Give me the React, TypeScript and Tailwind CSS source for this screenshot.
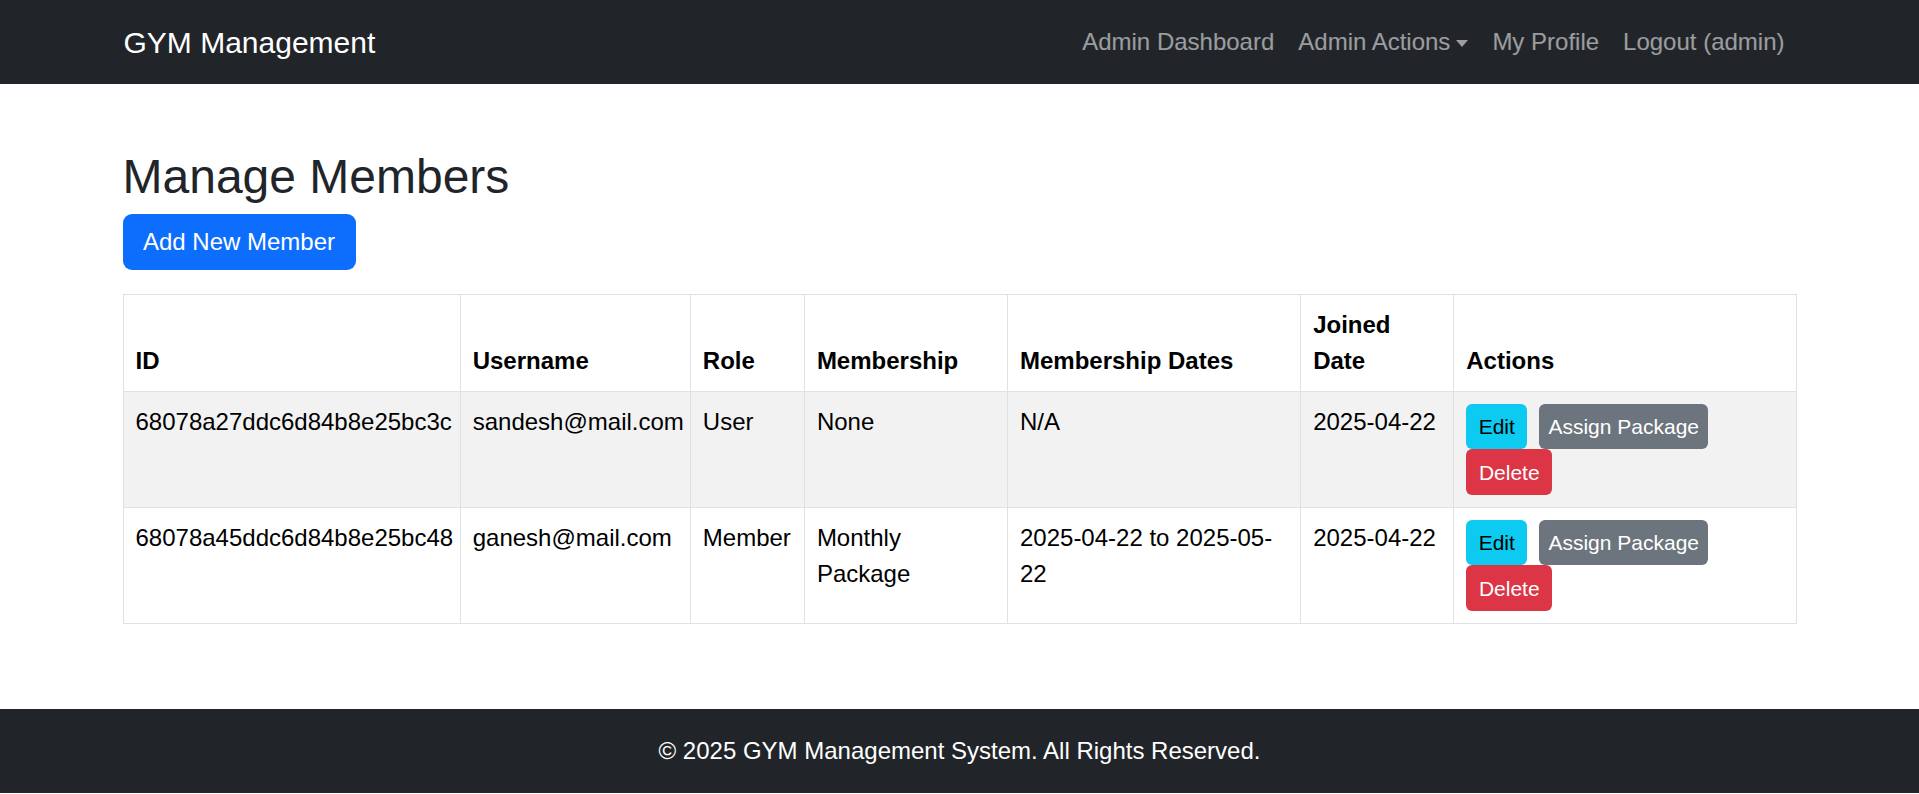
import React from "react";

type Member = {
    id: string;
    username: string;
    role: string;
    membership: string;
    dates: string;
    joined: string;
};

const members: Member[] = [
    { id: "68078a27ddc6d84b8e25bc3c", username: "sandesh@mail.com", role: "User", membership: "None", dates: "N/A", joined: "2025-04-22" },
    { id: "68078a45ddc6d84b8e25bc48", username: "ganesh@mail.com", role: "Member", membership: "Monthly Package", dates: "2025-04-22 to 2025-05-22", joined: "2025-04-22" },
];

const font = { fontFamily: '"Liberation Sans", Arial, sans-serif' };

function Navbar() {
    return (
        <nav className="bg-[#212529] h-[84px]">
            <div className="max-w-[1710px] mx-auto px-[18px] h-full flex items-center justify-between">
                <a href="#" className="text-white text-[30px] leading-[45px] ml-[1px]">GYM Management</a>
                <ul className="flex items-center text-[24px] leading-[36px] text-white/55">
                    <li><a href="#" className="block px-[12px]">Admin Dashboard</a></li>
                    <li>
                        <a href="#" className="flex items-center px-[12px]">
                            Admin Actions
                            {/* dropdown caret */}
                            <span className="ml-[6px] mt-[2px] w-0 h-0 border-t-[7px] border-t-current border-x-[6px] border-x-transparent" />
                        </a>
                    </li>
                    <li><a href="#" className="block px-[12px]">My Profile</a></li>
                    <li><a href="#" className="block px-[12px]">Logout (admin)</a></li>
                </ul>
            </div>
        </nav>
    );
}

function ActionButtons() {
    return (
        <div className="flex flex-wrap gap-x-[12px] text-[21px] leading-[31px]">
            <button className="h-[45px] w-[61px] rounded-[6px] bg-[#0dcaf0] text-black">Edit</button>
            <button className="h-[45px] w-[169px] rounded-[6px] bg-[#6c757d] text-white">Assign Package</button>
            <button className="h-[46px] w-[86px] rounded-[6px] bg-[#dc3545] text-white">Delete</button>
        </div>
    );
}

export default function App() {
    return (
        <div className="bg-white text-[#212529]" style={font}>
            <Navbar />

            <main className="max-w-[1710px] mx-auto px-[18px] pt-[64px] pb-[85px]">
                <h2 className="text-[48px] leading-[58px] font-medium mb-[8px]">Manage Members</h2>
                <button className="h-[56px] w-[233px] rounded-[9px] bg-[#0d6efd] text-white text-[24px] leading-[36px] mb-[24px]">
                    Add New Member
                </button>

                <table className="w-full table-fixed border-collapse text-[24px] leading-[36px] text-black">
                    <colgroup>
                        <col className="w-[337px]" />
                        <col className="w-[230px]" />
                        <col className="w-[114px]" />
                        <col className="w-[203px]" />
                        <col className="w-[293px]" />
                        <col className="w-[153px]" />
                        <col className="w-[342px]" />
                    </colgroup>
                    <thead>
                        <tr className="align-bottom text-left">
                            <th className="border border-[#dee2e6] p-[12px] font-bold">ID</th>
                            <th className="border border-[#dee2e6] p-[12px] font-bold">Username</th>
                            <th className="border border-[#dee2e6] p-[12px] font-bold">Role</th>
                            <th className="border border-[#dee2e6] p-[12px] font-bold">Membership</th>
                            <th className="border border-[#dee2e6] p-[12px] font-bold">Membership Dates</th>
                            <th className="border border-[#dee2e6] p-[12px] font-bold">Joined Date</th>
                            <th className="border border-[#dee2e6] p-[12px] font-bold">Actions</th>
                        </tr>
                    </thead>
                    <tbody>
                        {members.map((m, i) => (
                            <tr key={m.id} className={`align-top ${i % 2 === 0 ? "bg-[#f2f2f2]" : "bg-white"}`}>
                                <td className="border border-[#dee2e6] p-[12px] whitespace-nowrap">{m.id}</td>
                                <td className="border border-[#dee2e6] p-[12px] whitespace-nowrap">{m.username}</td>
                                <td className="border border-[#dee2e6] p-[12px]">{m.role}</td>
                                <td className="border border-[#dee2e6] p-[12px]">{m.membership}</td>
                                <td className="border border-[#dee2e6] p-[12px]">{m.dates}</td>
                                <td className="border border-[#dee2e6] p-[12px]">{m.joined}</td>
                                <td className="border border-[#dee2e6] p-[12px]">
                                    <ActionButtons />
                                </td>
                            </tr>
                        ))}
                    </tbody>
                </table>
            </main>

            <footer className="bg-[#212529] text-white text-center text-[24px] leading-[36px] py-[24px]">
                © 2025 GYM Management System. All Rights Reserved.
            </footer>
        </div>
    );
}
